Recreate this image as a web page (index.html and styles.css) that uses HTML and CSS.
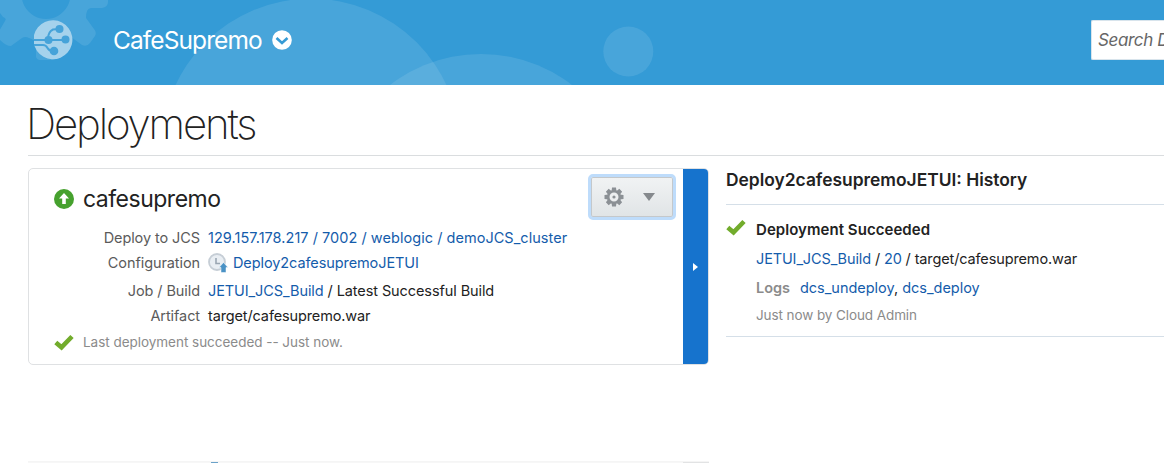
FILE: index.html
```html
<!DOCTYPE html>
<html lang="en">
<head>
<meta charset="utf-8">
<title>Deployments</title>
<link rel="stylesheet" href="styles.css">
</head>
<body>
<header class="topbar">
  <svg class="topbar-art" width="1164" height="85" viewBox="0 0 1164 85" aria-hidden="true">
    <g fill="#fff" fill-opacity=".1">
      <circle cx="311" cy="148" r="149.4"/>
      <circle cx="481" cy="203" r="149"/>
      <circle cx="628.3" cy="51.500" r="25"/>
      <path fill-rule="evenodd" d="M-6-10V5L3 17Q7 18 5 21L-2 33 0 40Q6 46 11 46L22 38Q25 36 29 38L36 41V57Q37 60 40 60H52Q56 60 56 57V41L63 38Q68 35 71 37L82 45Q87 47 90 43L95 36Q97 32 94 29L86 18Q86 8 91 8H102Q108 7 108 2V-10ZM46-29.800a24.400 24.400 0 1 0 .01 0Z"/>
    </g>
  </svg>
  <svg class="logo" width="40" height="40" viewBox="0 0 40 40" aria-hidden="true">
    <path d="M0 15A19.500 19.500 0 1 1 3 31L0 25Z" fill="#a5d2ec"/>
    <g fill="none" stroke="#46a3d9" stroke-width="2">
      <path d="M0 20H32M14 19Q14 12 19 9.500L25 9M0 25H9Q12 25 13.500 28T19 31"/>
    </g>
    <g fill="#46a3d9"><circle cx="14.500" cy="20" r="4"/><circle cx="25.500" cy="9" r="4"/><circle cx="31.500" cy="19.500" r="4"/><circle cx="20" cy="31" r="4.300"/></g>
  </svg>
  <span class="project">CafeSupremo</span>
  <svg class="chev" width="20" height="20" viewBox="0 0 20 20"><circle cx="10" cy="10" r="9.800" fill="#fff"/><path d="M4.500 8 10 13 15.500 8" fill="none" stroke="#369bd5" stroke-width="2.600"/></svg>
  <div class="search">Search Deployments</div>
</header>
<main class="page">
  <h1 class="title"><span>Deployments</span></h1>
  <div class="columns">
    <section class="card">
      <div class="card-main">
        <div class="card-head">
          <svg width="20" height="20" viewBox="0 0 20 20"><circle cx="10" cy="10" r="10" fill="#46a12e"/><path d="M10 4 15 9.500H11.800V15H8.200V9.500H5Z" fill="#fff"/></svg>
          <span class="app-name">cafesupremo</span>
          <div class="menu-button">
            <svg width="20" height="20" viewBox="0 0 20 20"><g fill="#8b9095"><path id="tooth" d="M8 .5H12L12.500 5H7.500ZM8 19.500H12L12.500 15H7.500Z"/><use href="#tooth" transform="rotate(45 10 10)"/><use href="#tooth" transform="rotate(90 10 10)"/><use href="#tooth" transform="rotate(135 10 10)"/></g><circle cx="10" cy="10" r="5.800" fill="#eceef0" stroke="#8b9095" stroke-width="2.600"/><circle cx="10" cy="10" r="1.600" fill="#8b9095"/></svg>
            <svg width="12" height="8" viewBox="0 0 12 8"><path d="M0 0H12L6 8Z" fill="#85898d"/></svg>
          </div>
        </div>
        <dl class="details">
          <dt>Deploy to JCS</dt><dd class="target"><a>129.157.178.217 / 7002 / weblogic / demoJCS_cluster</a></dd>
          <dt>Configuration</dt><dd><svg class="clock" width="20" height="20" viewBox="0 0 20 20"><circle cx="9" cy="9" r="8" fill="#e9eef3" stroke="#c6ced6" stroke-width="1.800"/><path d="M8 5V10.500H12" fill="none" stroke="#9aa6b2" stroke-width="1.600"/><path d="M15.500 9.500 20 14.500H18V19.500H13V14.500H11Z" fill="#4a92c5" stroke="#fff" stroke-width=".5"/></svg><a>Deploy2cafesupremoJETUI</a></dd>
          <dt>Job / Build</dt><dd><a>JETUI_JCS_Build</a> / Latest Successful Build</dd>
          <dt>Artifact</dt><dd class="artifact">target/cafesupremo.war</dd>
        </dl>
        <div class="status">
          <svg width="20" height="17" viewBox="0 0 20 17"><path d="M1.800 8.500 7.500 13.300 18 2.500" fill="none" stroke="#72ac2c" stroke-width="4.600"/></svg>
          <span>Last deployment succeeded -- Just now.</span>
        </div>
      </div>
      <div class="expander"><svg width="5" height="8" viewBox="0 0 5 8"><path d="M0 0 5 4 0 8Z" fill="#fff"/></svg></div>
    </section>
    <aside class="history">
      <h2 class="history-title">Deploy2cafesupremoJETUI: History</h2>
      <div class="entry">
        <svg width="20" height="17" viewBox="0 0 20 17"><path d="M1.800 8.500 7.500 13.300 18 2.500" fill="none" stroke="#72ac2c" stroke-width="4.600"/></svg>
        <div class="entry-body">
          <div class="result"><b>Deployment Succeeded</b></div>
          <div class="build"><a>JETUI_JCS_Build</a> / <a>20</a> / target/cafesupremo.war</div>
          <div class="logs"><b>Logs</b><a>dcs_undeploy</a>, <a>dcs_deploy</a></div>
          <div class="when">Just now by Cloud Admin</div>
        </div>
      </div>
    </aside>
  </div>
  <div class="next-card"><i class="next-dot"></i><i class="next-bar"></i></div>
</main>
</body>
</html>
```
FILE: styles.css
```css
* { box-sizing: border-box; }
body { margin: 0; width: 1164px; height: 463px; overflow: hidden; background: #fff; color: #222; font: 14.5px/20px Inter, "Liberation Sans", sans-serif; }
svg { display: block; flex: none; }
a { color: #145cab; }
.topbar { position: relative; height: 85px; padding: 0 0 5px 34px; background: #349bd6; display: flex; align-items: center; overflow: hidden; white-space: nowrap; }
.topbar-art { position: absolute; left: 0; top: 0; }
.logo, .project, .chev, .search { position: relative; }
.project { margin-left: 39px; width: 159px; color: #fff; font-size: 24.5px; line-height: 30px; letter-spacing: -.9px; }
.chev { margin-bottom: 1px; }
.search { flex: none; margin-left: auto; width: 73px; height: 40px; padding-left: 6px; background: #fff; border: 1px solid #d8e4ec; border-right: 0; border-radius: 2px 0 0 2px; overflow: hidden; color: #666; font-size: 17px; font-style: italic; line-height: 38px; letter-spacing: -.35px; }
.page { padding-left: 28px; }
.title { margin: 0; height: 71px; border-bottom: 1px solid #dadddf; font-size: 42px; line-height: 77px; font-weight: 200; letter-spacing: -2.15px; text-indent: -2px; }
.columns { display: flex; gap: 17px; padding-top: 12px; white-space: nowrap; }
.card { width: 681px; height: 197px; border: 1px solid #dfe1e3; border-radius: 5px; display: flex; overflow: hidden; }
.card-main { flex: 1; padding-left: 25px; }
.card-head { display: flex; align-items: center; height: 59px; padding-right: 7px; }
.app-name { margin-left: 9px; font-size: 23px; line-height: 30px; letter-spacing: -.5px; }
.menu-button { margin: 0 0 3px auto; width: 88px; height: 46px; border: 3px solid #bedcfb; border-radius: 5px; padding-left: 13px; background: linear-gradient(#f1f3f4, #e0e4e6); box-shadow: inset 0 0 0 1px #c4c8cb; display: flex; align-items: center; gap: 19px; }
.details { margin: 0; display: grid; grid-template-columns: 146px 1fr; column-gap: 8px; grid-template-rows: 25px 28px 25px 22px; line-height: 20px; letter-spacing: -.09px; }
.details dt { color: #5b5b5b; text-align: right; }
.details dd { margin: 0; display: flex; white-space: pre; align-items: flex-start; }
.details .target { letter-spacing: .04px; }
.details .artifact { letter-spacing: -.13px; }
.clock { margin-right: 5px; }
.status { display: flex; align-items: center; gap: 9px; color: #8b8b8b; font-size: 13.5px; height: 28px; letter-spacing: -.03px; }
.expander { width: 25px; background: #1673cd; display: flex; align-items: center; justify-content: center; }
.history { flex: 1; }
.history-title { margin: 0; height: 37px; border-bottom: 1px solid #d5dfe8; font-size: 17.4px; font-weight: 600; line-height: 23px; }
.entry { display: flex; gap: 10px; height: 132px; padding-top: 14px; border-bottom: 1px solid #d5dfe8; }
.entry-body { line-height: 29px; margin-top: -4px; }
.entry b { font-weight: 600; }
.result { font-size: 15px; letter-spacing: .05px; }
.build { letter-spacing: -.13px; }
.logs b { color: #8b8b8b; margin-right: 10px; }
.logs { letter-spacing: -.02px; }
.when { color: #8b8b8b; font-size: 13.5px; line-height: 26px; letter-spacing: -.09px; }
.next-card { margin-top: 96px; width: 681px; height: 2px; border-top: 1px solid #f5f5f5; background: #f7f7f7; display: flex; justify-content: space-between; }
.next-dot { margin-left: 183px; width: 7px; height: 2px; background: #6ba2c9; }
.next-bar { width: 26px; height: 2px; background: #e2e3e4; }
```
